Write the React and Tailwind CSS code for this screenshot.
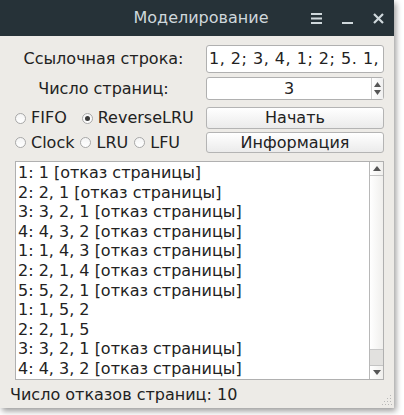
const lines = [
  "1: 1 [отказ страницы]",
  "2: 2, 1 [отказ страницы]",
  "3: 3, 2, 1 [отказ страницы]",
  "4: 4, 3, 2 [отказ страницы]",
  "1: 1, 4, 3 [отказ страницы]",
  "2: 2, 1, 4 [отказ страницы]",
  "5: 5, 2, 1 [отказ страницы]",
  "1: 1, 5, 2",
  "2: 2, 1, 5",
  "3: 3, 2, 1 [отказ страницы]",
  "4: 4, 3, 2 [отказ страницы]",
  "5: 5, 4, 3 [отказ страницы]",
];

const Radio = ({ label, checked }) => (
  <label className="flex items-center gap-[5px]">
    <span className="w-[11px] h-[11px] rounded-full border border-[#a8a8a8] bg-gradient-to-b from-[#f4f4f4] to-white flex items-center justify-center">
      {checked && <span className="w-[5px] h-[5px] rounded-full bg-[#3a3a3a]"></span>}
    </span>
    <span>{label}</span>
  </label>
);

const Button = ({ children, className = "" }) => (
  <button className={`w-full border border-[#b4b4b4] rounded-[3px] bg-gradient-to-b from-white to-[#ebebeb] text-[#222] leading-none ${className}`}>
    {children}
  </button>
);

const App = () => {
  return (
    <div className="w-[404px] h-[415px] bg-white overflow-hidden" style={{ fontFamily: "'DejaVu Sans', sans-serif" }}>
      <div className="w-[394px] h-[408px] flex flex-col bg-[#edebe7] shadow-[2px_3px_6px_rgba(0,0,0,0.4)] text-[16px] text-[#222]">
        {/* Title bar */}
        <div className="h-[36px] shrink-0 bg-[#263238] flex items-center relative">
          <div className="absolute left-0 right-0 top-0 h-full flex items-center justify-center pl-[8px] text-[#cfd8dc] text-[16px]">
            Моделирование
          </div>
          <div className="ml-auto flex items-center gap-[20px] pr-[10px] relative">
            <svg width="11" height="11" viewBox="0 0 11 11">
              <rect x="0" y="0" width="11" height="2" fill="#cfd8dc" />
              <rect x="0" y="4.5" width="11" height="2" fill="#cfd8dc" />
              <rect x="0" y="9" width="11" height="2" fill="#cfd8dc" />
            </svg>
            <svg width="11" height="11" viewBox="0 0 11 11">
              <rect x="0" y="9" width="11" height="2" fill="#cfd8dc" />
            </svg>
            <svg width="11" height="11" viewBox="0 0 11 11">
              <path d="M1 1 L10 10 M10 1 L1 10" stroke="#cfd8dc" strokeWidth="2.2" />
            </svg>
          </div>
        </div>

        {/* Content */}
        <div className="flex-1 flex flex-col pl-[15px] pr-[10px] pt-[9px] min-h-0">
          <div className="grid grid-cols-[187px_178px] gap-x-[9px] ml-[-5px]">
            <div className="h-[28px] flex items-center justify-center">Ссылочная строка:</div>
            <div className="h-[28px] bg-white border border-[#b0b0b0] rounded-[3px] flex items-center pl-[2px] overflow-hidden whitespace-nowrap tracking-[0.5px]">
              1, 2; 3, 4, 1; 2; 5. 1, 2, 3, 4, 5
            </div>

            <div className="h-[23px] mt-[4px] flex items-center justify-center">Число страниц:</div>
            <div className="h-[23px] mt-[4px] bg-white border border-[#b0b0b0] rounded-[3px] flex">
              <div className="flex-1 flex items-center justify-center">3</div>
              <div className="w-[12px] border-l border-[#d0d0d0] flex flex-col items-center justify-center gap-[3px] bg-gradient-to-r from-white to-[#f0f0f0]">
                <svg width="7" height="5" viewBox="0 0 7 5"><path d="M3.5 0 L7 5 L0 5 Z" fill="#555" /></svg>
                <svg width="7" height="5" viewBox="0 0 7 5"><path d="M0 0 L7 0 L3.5 5 Z" fill="#555" /></svg>
              </div>
            </div>

            <div className="h-[22px] mt-[7px] flex items-center gap-[15px] pl-[5px]">
              <Radio label="FIFO" />
              <Radio label="ReverseLRU" checked />
            </div>
            <Button className="h-[22px] mt-[7px]">Начать</Button>

            <div className="h-[21px] mt-[3px] flex items-center gap-[6px] pl-[5px]">
              <Radio label="Clock" />
              <Radio label="LRU" />
              <Radio label="LFU" />
            </div>
            <Button className="h-[21px] mt-[3px]">Информация</Button>
          </div>

          {/* Output list */}
          <div className="mt-[8px] h-[219px] shrink-0 bg-white border border-[#b0b0b0] flex overflow-hidden">
            <div className="flex-1 overflow-hidden pl-[2px] pt-[1px] leading-[19.6px] whitespace-nowrap">
              {lines.map((l, i) => (
                <div key={i}>{l}</div>
              ))}
            </div>
            <div className="w-[14px] border-l border-[#b8b8b8] flex flex-col bg-gradient-to-r from-white to-[#f0efed]">
              <div className="h-[14px] border-b border-[#c4c4c4] flex items-center justify-center">
                <svg width="8" height="5" viewBox="0 0 8 5"><path d="M4 0 L8 5 L0 5 Z" fill="#555" /></svg>
              </div>
              <div className="flex-1"></div>
              <div className="h-[16px] bg-[#e2e1df] border-t border-[#c8c8c8]"></div>
              <div className="h-[14px] border-t border-[#c4c4c4] flex items-center justify-center">
                <svg width="8" height="5" viewBox="0 0 8 5"><path d="M0 0 L8 0 L4 5 Z" fill="#555" /></svg>
              </div>
            </div>
          </div>

          {/* Status bar */}
          <div className="flex-1 flex items-center ml-[-5px] pt-[2px] relative">
            <span>Число отказов страниц: 10</span>
            <svg className="absolute right-[-8px] bottom-[3px]" width="10" height="10" viewBox="0 0 10 10">
              <rect x="8" y="0" width="1" height="1" fill="#b8b8b8" />
              <rect x="5" y="3" width="1" height="1" fill="#b8b8b8" />
              <rect x="8" y="3" width="1" height="1" fill="#b8b8b8" />
              <rect x="2" y="6" width="1" height="1" fill="#b8b8b8" />
              <rect x="5" y="6" width="1" height="1" fill="#b8b8b8" />
              <rect x="8" y="6" width="1" height="1" fill="#b8b8b8" />
              <rect x="0" y="9" width="1" height="1" fill="#b8b8b8" />
              <rect x="3" y="9" width="1" height="1" fill="#b8b8b8" />
              <rect x="6" y="9" width="1" height="1" fill="#b8b8b8" />
              <rect x="9" y="9" width="1" height="1" fill="#b8b8b8" />
            </svg>
          </div>
        </div>
      </div>
    </div>
  );
};

export default App;
